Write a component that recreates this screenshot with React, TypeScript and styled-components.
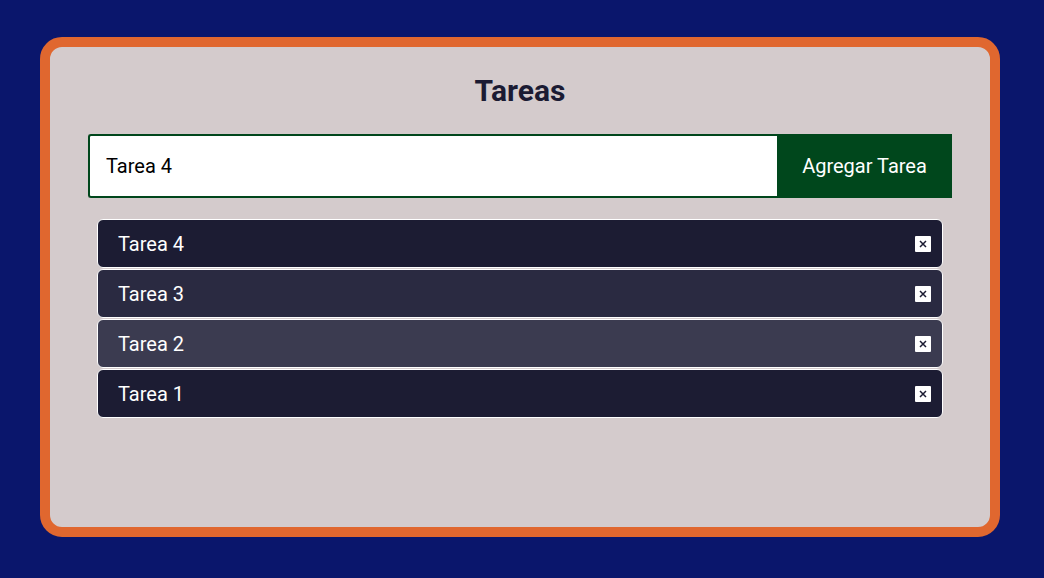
import { ChangeEvent, FormEvent, useState } from 'react';
import styled, { createGlobalStyle } from 'styled-components';

const GlobalStyle = createGlobalStyle`
  body {
    margin: 0;
    background: #0a166c;
    font-family: Roboto, "Noto Sans", sans-serif;
  }
`;

const Page = styled.div`
  padding: 37px 44px 0 40px;
`;

const Card = styled.div`
  box-sizing: border-box;
  width: 960px;
  height: 500px;
  border: 10px solid #e0672f;
  border-radius: 22px;
  background: #d4cbcc;
  padding: 26px 38px 0;
`;

const Title = styled.h1`
  margin: 0 0 25px;
  font-size: 30px;
  line-height: 36px;
  font-weight: 700;
  text-align: center;
  color: #1b1b33;
`;

const Form = styled.form`
  display: flex;
  height: 64px;
`;

const Input = styled.input`
  flex: 1;
  min-width: 0;
  border: 2px solid #00471c;
  border-right: none;
  border-radius: 3px 0 0 3px;
  padding: 0 16px;
  font-family: inherit;
  font-size: 20px;
  color: #000;
  background: #fff;
  outline: none;
`;

const AddButton = styled.button`
  width: 175px;
  border: none;
  background: #00471c;
  color: #fff;
  font-family: inherit;
  font-size: 20px;
  cursor: pointer;
`;

const List = styled.ul`
  list-style: none;
  margin: 21px 9px 0;
  padding: 0;
  display: flex;
  flex-direction: column;
  gap: 1px;
`;

const Item = styled.li<{ $bg: string }>`
  height: 49px;
  box-sizing: border-box;
  display: flex;
  align-items: center;
  justify-content: space-between;
  padding: 0 11px 0 20px;
  border: 1px solid #fff;
  border-radius: 6px;
  background: ${(p) => p.$bg};
  color: #fff;
  font-size: 20px;
`;

const Remove = styled.button`
  width: 16px;
  height: 16px;
  padding: 0;
  border: none;
  border-radius: 1px;
  background: #fff;
  display: flex;
  align-items: center;
  justify-content: center;
  cursor: pointer;
`;

const shades = ['#1c1c33', '#2a2a41', '#3b3b50', '#1c1c33'];

export default function App() {
  const [value, setValue] = useState('Tarea 4');
  const [tasks, setTasks] = useState(['Tarea 4', 'Tarea 3', 'Tarea 2', 'Tarea 1']);

  const changeHandle = (evn: ChangeEvent<HTMLInputElement>) => setValue(evn.target.value);
  const submitHandle = (evn: FormEvent) => {
    evn.preventDefault();
    if (!value.trim()) return;
    setTasks([value, ...tasks]);
  };

  return (
    <Page>
      <GlobalStyle />
      <Card>
        <Title>Tareas</Title>
        <Form onSubmit={submitHandle}>
          <Input type="text" value={value} onChange={changeHandle} />
          <AddButton type="submit">Agregar Tarea</AddButton>
        </Form>
        <List>
          {tasks.map((task, i) => (
            <Item key={task + i} $bg={shades[i % shades.length]}>
              {task}
              <Remove onClick={() => setTasks(tasks.filter((_, j) => j !== i))}>
                <svg width="8" height="8" viewBox="0 0 8 8">
                  <path d="M1 1L7 7M7 1L1 7" stroke="#1c1c33" strokeWidth="1.5" />
                </svg>
              </Remove>
            </Item>
          ))}
        </List>
      </Card>
    </Page>
  );
}
